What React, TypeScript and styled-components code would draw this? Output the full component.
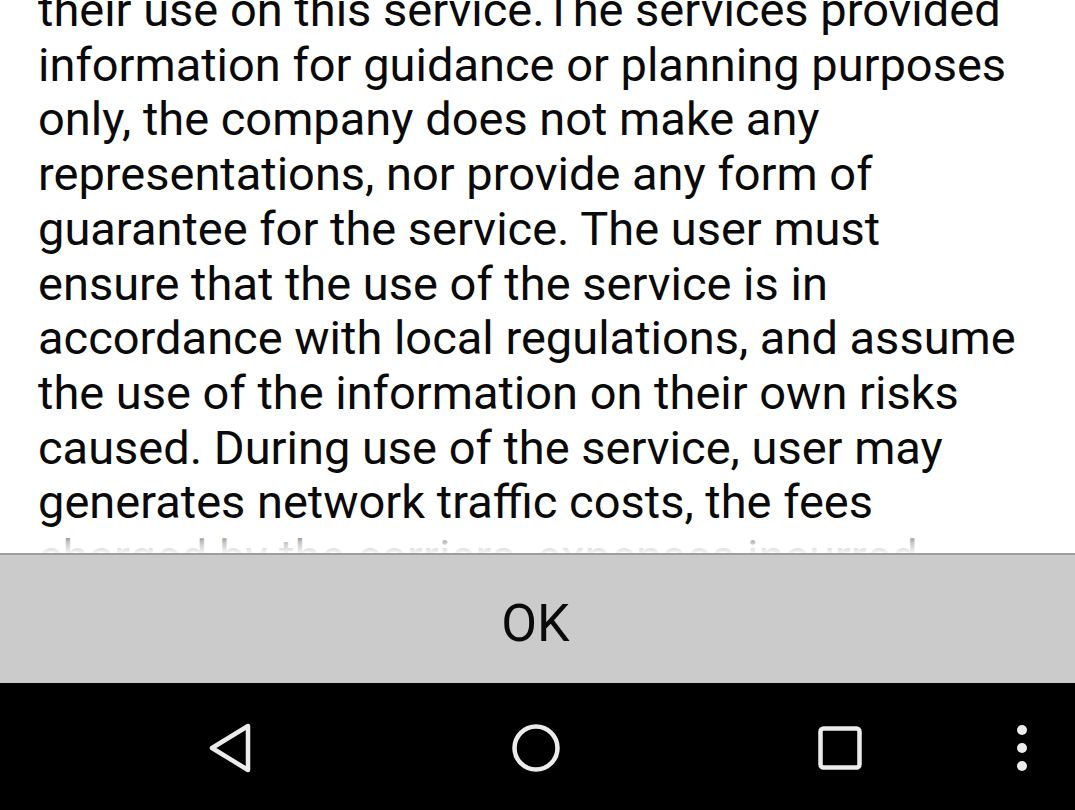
import React from "react";
import styled, { createGlobalStyle } from "styled-components";

const Global = createGlobalStyle`
  html, body { margin: 0; padding: 0; background: #ffffff; }
  body { font-family: Roboto, "Noto Sans", "Liberation Sans", sans-serif; }
  #root { width: 1075px; height: 810px; overflow: hidden; }
`;

const Screen = styled.div`
  width: 1075px;
  height: 810px;
  display: flex;
  flex-direction: column;
  background: #ffffff;
`;

const ScrollArea = styled.div`
  position: relative;
  height: 553px;
  overflow: hidden;
  flex: none;
`;

const TextBlock = styled.div`
  margin-top: -17px;
  padding-left: 38px;
  font-family: Roboto, "Noto Sans", sans-serif;
  font-size: 47px;
  line-height: 54.7px;
  color: #0a0a0a;
`;

const Line = styled.div`
  white-space: nowrap;
`;

const Fade = styled.div`
  position: absolute;
  left: 0;
  right: 0;
  bottom: 0;
  height: 18px;
  background: linear-gradient(
    to bottom,
    rgba(255, 255, 255, 0.5) 0%,
    rgba(255, 255, 255, 0.78) 45%,
    rgba(255, 255, 255, 0.96) 100%
  );
`;

const ButtonBar = styled.div`
  height: 128px;
  flex: none;
  border-top: 2px solid #9e9e9e;
  background: #cbcbcb;
  display: flex;
  align-items: center;
  justify-content: center;
`;

const OkButton = styled.button`
  border: none;
  background: transparent;
  font-family: Roboto, "Noto Sans", sans-serif;
  font-size: 52px;
  color: #0a0a0a;
  padding: 0;
  margin-top: 8px;
  margin-left: -4px;
  cursor: pointer;
`;

const NavBar = styled.div`
  flex: 1;
  background: #000000;
  display: grid;
  grid-template-columns: 80px repeat(3, 304px) 1fr;
  align-items: center;
`;

const NavCell = styled.div<{ $start?: boolean }>`
  display: flex;
  justify-content: ${(p) => (p.$start ? "flex-start" : "center")};
  padding-left: ${(p) => (p.$start ? "25px" : "0")};
  padding-top: 2px;
`;

const Dots = styled.div`
  display: flex;
  flex-direction: column;
  gap: 8px;
`;

const Dot = styled.span`
  width: 10px;
  height: 10px;
  border-radius: 50%;
  background: #ececec;
`;

const lines = [
  "their use on this service.The services provided",
  "information for guidance or planning purposes",
  "only, the company does not make any",
  "representations, nor provide any form of",
  "guarantee for the service. The user must",
  "ensure that the use of the service is in",
  "accordance with local regulations, and assume",
  "the use of the information on their own risks",
  "caused. During use of the service, user may",
  "generates network traffic costs, the fees",
  "charged by the carriers, expenses incurred",
];

export default function App() {
  return (
    <>
      <Global />
      <Screen>
        <ScrollArea>
          <TextBlock>
            {lines.map((l, i) => (
              <Line key={i}>{l}</Line>
            ))}
          </TextBlock>
          <Fade />
        </ScrollArea>
        <ButtonBar>
          <OkButton>OK</OkButton>
        </ButtonBar>
        <NavBar>
          <div />
          <NavCell>
            <svg width="48" height="52" viewBox="0 0 48 52">
              <path
                d="M40 4 L40 48 L4 26 Z"
                fill="none"
                stroke="#ececec"
                strokeWidth="4.5"
                strokeLinejoin="round"
              />
            </svg>
          </NavCell>
          <NavCell>
            <svg width="50" height="50" viewBox="0 0 50 50">
              <circle cx="25" cy="25" r="21.5" fill="none" stroke="#ececec" strokeWidth="4.5" />
            </svg>
          </NavCell>
          <NavCell>
            <svg width="46" height="46" viewBox="0 0 46 46">
              <rect x="3.5" y="3.5" width="39" height="39" rx="3" fill="none" stroke="#ececec" strokeWidth="4.5" />
            </svg>
          </NavCell>
          <NavCell $start>
            <Dots>
              <Dot />
              <Dot />
              <Dot />
            </Dots>
          </NavCell>
        </NavBar>
      </Screen>
    </>
  );
}
